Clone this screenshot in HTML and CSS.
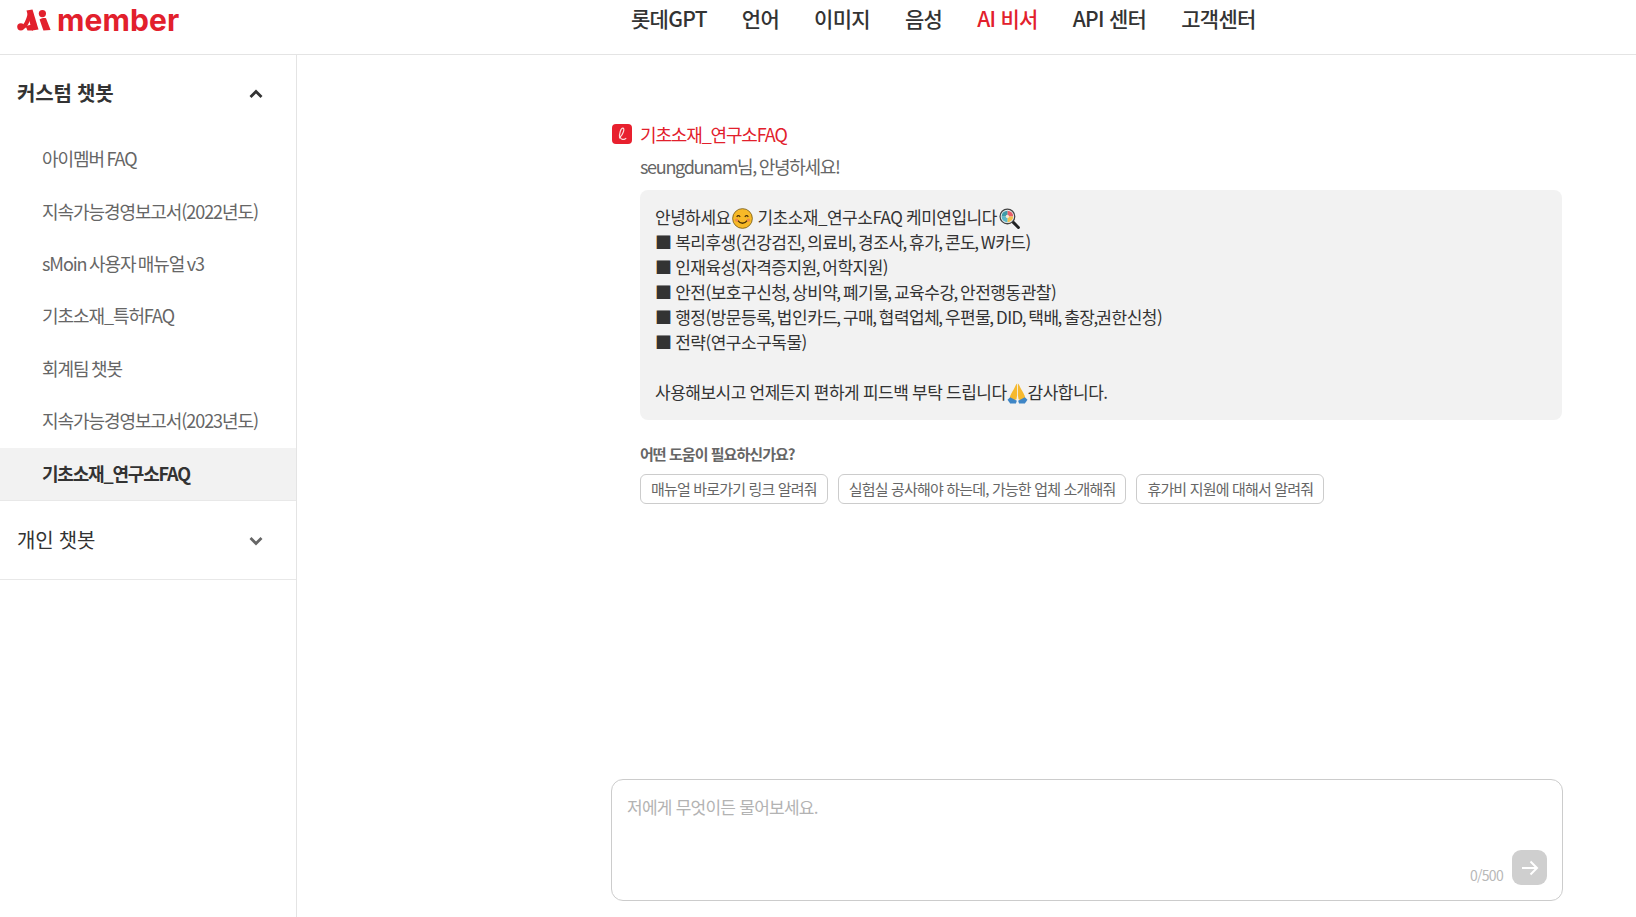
FILE: index.html
```html
<!DOCTYPE html>
<html lang="ko">
<head>
<meta charset="utf-8">
<title>Aimember</title>
<link rel="stylesheet" href="styles.css">
</head>
<body>
<header class="topbar">
  <a class="logo">
    <svg class="logo-mark" viewBox="0 0 34 22" width="34" height="22">
      <circle cx="3.8" cy="17.8" r="3.6" fill="#e2202c"/>
      <path d="M3.8 18.6 C8.5 19 11 12 13.2 3.5" fill="none" stroke="#e2202c" stroke-width="4"/>
      <path d="M9.5 1.6 L15.5 0.4 L21.5 20.6 L15 21.4 Z" fill="#e2202c"/>
      <path d="M8.5 17 L15 15.5 L16 21.4 L10.5 21.4 Z" fill="#e2202c"/>
      <circle cx="25.4" cy="4.6" r="3.6" fill="#e2202c"/>
      <path d="M22.6 10.4 C25 9 27.5 8.6 29 9.2 L33.6 21 L26.4 21.4 Z" fill="#e2202c"/>
    </svg>
    <span class="logo-text">member</span>
  </a>
  <nav class="gnb">
    <a>롯데GPT</a>
    <a>언어</a>
    <a>이미지</a>
    <a>음성</a>
    <a class="on">AI 비서</a>
    <a>API 센터</a>
    <a>고객센터</a>
  </nav>
</header>
<div class="body">
  <aside class="side">
    <div class="sec-head strong">
      <span>커스텀 챗봇</span>
      <svg class="chev" viewBox="0 0 14 10" width="14" height="10"><path d="M1.5 8 L7 2.5 L12.5 8" fill="none" stroke="#333" stroke-width="2.8"/></svg>
    </div>
    <ul class="items">
      <li>아이멤버 FAQ</li>
      <li>지속가능경영보고서(2022년도)</li>
      <li>sMoin 사용자 매뉴얼 v3</li>
      <li>기초소재_특허FAQ</li>
      <li>회계팀 챗봇</li>
      <li>지속가능경영보고서(2023년도)</li>
      <li class="active">기초소재_연구소FAQ</li>
    </ul>
    <div class="sec-head plain">
      <span>개인 챗봇</span>
      <svg class="chev" viewBox="0 0 14 10" width="14" height="10"><path d="M1.5 2 L7 7.5 L12.5 2" fill="none" stroke="#666" stroke-width="2.8"/></svg>
    </div>
  </aside>
  <main class="main">
    <div class="bot-head">
      <svg class="bot-icon" viewBox="0 0 20 20" width="20" height="20">
        <rect width="20" height="20" rx="4" fill="#e8202e"/>
        <path d="M7.6 14 C7 10 8.8 3.8 11 4.2 C13.2 4.7 10.6 11 8.2 13 C8.8 16 11.5 16 13.8 14.4" fill="none" stroke="#fbdcdc" stroke-width="1.2" stroke-linecap="round"/>
      </svg>
      <span class="bot-name">기초소재_연구소FAQ</span>
    </div>
    <div class="thread">
      <p class="hello">seungdunam님, 안녕하세요!</p>
      <div class="bubble">
        <p>안녕하세요<svg class="emoji smile" viewBox="0 0 20 20"><circle cx="10" cy="10" r="9.4" fill="#f7b928" stroke="#7a5a10" stroke-width=".8"/><path d="M4.5 8.5 Q6 6.2 7.8 8.5 M12.2 8.5 Q14 6.2 15.5 8.5" fill="none" stroke="#4a3208" stroke-width="1.2"/><path d="M5 11.5 Q10 17.5 15 11.5" fill="none" stroke="#4a3208" stroke-width="1.3"/><circle cx="4.4" cy="11.5" r="1.6" fill="#ee8a4a"/><circle cx="15.6" cy="11.5" r="1.6" fill="#ee8a4a"/></svg> 기초소재_연구소FAQ 케미연입니다<svg class="emoji lolly" viewBox="0 0 20 20"><path d="M12 12 L18.5 18.5" stroke="#222" stroke-width="2.8" stroke-linecap="round"/><circle cx="8" cy="8" r="7" fill="#e8eef0" stroke="#444" stroke-width="1.2"/><path d="M8 2.5 A5.5 5.5 0 0 1 13.5 8 L8 8 Z" fill="#e8606a"/><path d="M13.5 8 A5.5 5.5 0 0 1 8 13.5 L8 8 Z" fill="#f3c04c"/><path d="M8 13.5 A5.5 5.5 0 0 1 2.5 8 L8 8 Z" fill="#5bb8c8"/><path d="M2.5 8 A5.5 5.5 0 0 1 8 2.5 L8 8 Z" fill="#3f9aa8"/><circle cx="8" cy="8" r="1.6" fill="#f5e6d0"/></svg></p>
        <p>■ 복리후생(건강검진<span class="cm">,</span> 의료비<span class="cm">,</span> 경조사<span class="cm">,</span> 휴가<span class="cm">,</span> 콘도<span class="cm">,</span> W카드)</p>
        <p>■ 인재육성(자격증지원<span class="cm">,</span> 어학지원)</p>
        <p>■ 안전(보호구신청<span class="cm">,</span> 상비약<span class="cm">,</span> 폐기물<span class="cm">,</span> 교육수강<span class="cm">,</span> 안전행동관찰)</p>
        <p>■ 행정(방문등록<span class="cm">,</span> 법인카드<span class="cm">,</span> 구매<span class="cm">,</span> 협력업체<span class="cm">,</span> 우편물<span class="cm">,</span> DID<span class="cm">,</span> 택배<span class="cm">,</span> 출장<span class="cm">,</span>권한신청)</p>
        <p>■ 전략(연구소구독물)</p>
        <p class="blank">&nbsp;</p>
        <p>사용해보시고 언제든지 편하게 피드백 부탁 드립니다<svg class="emoji" viewBox="0 0 20 20"><path d="M9.6 0.5 L9.6 12 L9 15.5 L6 17 L2.5 15 C3 11 5 8.5 6.5 6 C7.5 4 8.4 1.5 9.6 0.5 Z" fill="#f6b92e"/><path d="M10.4 0.5 L10.4 12 L11 15.5 L14 17 L17.5 15 C17 11 15 8.5 13.5 6 C12.5 4 11.6 1.5 10.4 0.5 Z" fill="#f6b92e"/><path d="M0.5 16 L3 13.5 L9.4 17 L8.5 19.5 L3 19.5 Z" fill="#3f86c6"/><path d="M19.5 16 L17 13.5 L10.6 17 L11.5 19.5 L17 19.5 Z" fill="#3f86c6"/></svg>감사합니다.</p>
      </div>
      <p class="help">어떤 도움이 필요하신가요?</p>
      <div class="chips">
        <button class="chip">매뉴얼 바로가기 링크 알려줘</button>
        <button class="chip">실험실 공사해야 하는데, 가능한 업체 소개해줘</button>
        <button class="chip">휴가비 지원에 대해서 알려줘</button>
      </div>
    </div>
    <div class="composer">
      <span class="placeholder">저에게 무엇이든 물어보세요.</span>
      <div class="composer-foot">
        <span class="count">0/500</span>
        <button class="send" aria-label="전송">
          <svg viewBox="0 0 20 20" width="20" height="20"><path d="M2 10 H17 M10.5 3.5 L17 10 L10.5 16.5" fill="none" stroke="#fff" stroke-width="2"/></svg>
        </button>
      </div>
    </div>
  </main>
</div>
</body>
</html>
```
FILE: styles.css
```css
* { box-sizing: border-box; }
html, body { margin: 0; padding: 0; height: 100%; }
body {
  font-family: "Noto Sans CJK KR", "Noto Sans", sans-serif;
  color: #333;
  background: #fff;
  overflow: hidden;
}
p { margin: 0; }
ul { margin: 0; padding: 0; list-style: none; }

.topbar {
  height: 55px;
  border-bottom: 1px solid #e4e4e4;
  display: flex;
  position: relative;
}
.logo {
  display: flex;
  align-items: flex-end;
  gap: 6px;
  padding: 9px 0 0 17px;
  height: 31px;
  width: 183px;
  flex: none;
}
.logo-mark { display: block; flex: none; }
.logo-text {
  font-family: Inter, sans-serif;
  font-weight: 700;
  font-size: 30px;
  line-height: 22px;
  color: #e2202c;
  letter-spacing: 0.1px;
}
.gnb {
  display: flex;
  gap: 35px;
  margin-left: 448px;
  padding-top: 3px;
  height: 33px;
  align-items: center;
  font-size: 21px;
  font-weight: 500;
  letter-spacing: -0.7px;
  color: #333;
}
.gnb .on { color: #e2202c; }

.body { display: flex; height: 862px; }

.side {
  width: 297px;
  flex: none;
  border-right: 1px solid #e4e4e4;
}
.sec-head {
  height: 79px;
  display: flex;
  align-items: center;
  justify-content: space-between;
  padding: 0 32px 0 17px;
  font-size: 20px;
  letter-spacing: -0.2px;
  color: #333;
  border-bottom: 1px solid #e8e8e8;
}
.sec-head.strong { font-weight: 700; border-bottom: 0; padding-bottom: 4px; }
.sec-head.strong .chev { margin-top: 2px; }
.sec-head.plain { padding-bottom: 1px; }
.sec-head.plain .chev { margin-top: 2px; }
.chev { display: block; margin-right: 1px; }
.items li {
  height: 52.3px;
  display: flex;
  align-items: center;
  padding: 0 0 3.6px 42px;
  font-size: 18px;
  color: #666;
  letter-spacing: -1.08px;
  word-spacing: -1.5px;
}
.items li.active {
  height: 53.3px;
  padding-bottom: 2px;
  background: #f2f2f2;
  color: #333;
  font-weight: 700;
  letter-spacing: -1.2px;
  border-bottom: 1px solid #e8e8e8;
}

.main {
  flex: 1;
  display: flex;
  flex-direction: column;
  padding: 69px 73px 16px 315px;
  min-width: 0;
}
.bot-head { display: flex; align-items: center; gap: 8px; height: 20px; }
.bot-icon { display: block; flex: none; }
.bot-name { font-size: 18px; color: #e2202c; letter-spacing: -1.15px; }
.thread { padding: 0 1px 0 28px; }
.hello {
  margin-top: 10px;
  font-size: 18px;
  line-height: 24px;
  color: #666;
  letter-spacing: -1.3px;
  word-spacing: -1px;
}
.bubble {
  margin-top: 12px;
  background: #f2f2f2;
  border-radius: 8px;
  padding: 14px 15px 16px;
  font-size: 17px;
  line-height: 25px;
  color: #333;
  letter-spacing: -0.5px;
  word-spacing: -0.56px;
}
.bubble p { height: 25px; white-space: nowrap; }
.cm { letter-spacing: -1.8px; margin-left: -1.1px; }
.emoji { width: 21px; height: 21px; vertical-align: -5px; }
.emoji.smile { margin: 0 1px; }
.emoji.lolly { margin-left: 2px; }
.help {
  margin-top: 23px;
  font-size: 15px;
  line-height: 22px;
  font-weight: 700;
  color: #666;
  letter-spacing: -0.95px;
}
.chips { display: flex; gap: 10px; margin-top: 9px; }
.chip {
  height: 30px;
  padding: 0 10px 2px;
  background: #fff;
  border: 1px solid #ccc;
  border-radius: 6px;
  font-family: inherit;
  font-size: 15px;
  color: #666;
  letter-spacing: -0.83px;
}
.composer {
  margin-top: auto;
  margin-left: -1px;
  height: 122px;
  border: 1px solid #ccc;
  border-radius: 12px;
  padding: 15px;
  display: flex;
  flex-direction: column;
  justify-content: space-between;
}
.placeholder { font-size: 17px; line-height: 24px; color: #b3b3b3; letter-spacing: -0.75px; }
.composer-foot { display: flex; justify-content: flex-end; align-items: flex-end; gap: 9px; }
.count { font-size: 14px; line-height: 20px; color: #b8b8b8; letter-spacing: -0.7px; }
.send {
  width: 35px;
  height: 35px;
  border: 0;
  padding: 0;
  border-radius: 9px;
  background: #cfcfcf;
  display: flex;
  align-items: center;
  justify-content: center;
}
```
